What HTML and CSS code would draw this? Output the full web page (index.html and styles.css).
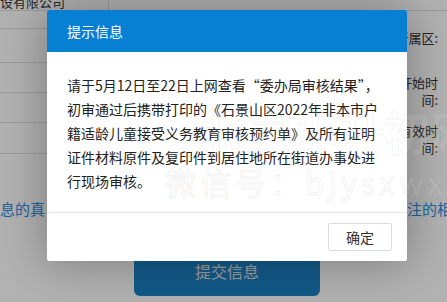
FILE: index.html
```html
<!DOCTYPE html>
<html lang="zh-CN">
<head>
<meta charset="utf-8">
<title>提示信息</title>
<link rel="stylesheet" href="styles.css">
</head>
<body>
<div class="page">
  <div class="row-top"><div class="cell-name"><span>设有限公司</span></div></div>
  <div class="table">
    <div class="col-left">
      <div class="tr r1"></div>
      <div class="tr r2"></div>
      <div class="tr r3"></div>
      <div class="tr r4"></div>
      <div class="tr r5"></div>
    </div>
    <div class="col-right">
      <div class="label l1">所属区:</div>
      <div class="label l2">开始时<br>间:</div>
      <div class="label l3">有效时<br>间:</div>
    </div>
  </div>
  <div class="links"><span>息的真</span><span class="cut">注的相关</span></div>
  <div class="submit-wrap"><div class="submit">提交信息</div></div>
</div>
<div class="overlay"></div>
<div class="modal">
  <div class="modal-head">提示信息</div>
  <div class="modal-body">请于5月12日至22日上网查看“委办局审核结果”，<br>初审通过后携带打印的《石景山区2022年非本市户<br>籍适龄儿童接受义务教育审核预约单》及所有证明<br>证件材料原件及复印件到居住地所在街道办事处进<br>行现场审核。</div>
  <div class="modal-foot"><button class="btn-ok">确定</button></div>
</div>
<div class="watermark">
  <div class="wm-big">北京小升初网</div>
  <div class="wm-small">微信号：bjysxwx</div>
</div>
</body>
</html>
```
FILE: styles.css
```css
html, body {
  margin: 0;
  padding: 0;
}
body {
  width: 447px;
  height: 302px;
  overflow: hidden;
  position: relative;
  background: #fff;
  font-family: "Noto Sans CJK SC", "Noto Sans", sans-serif;
  color: #333;
}
.page {
  width: 447px;
  height: 302px;
  display: flex;
  flex-direction: column;
}
.row-top {
  height: 10px;
  border-bottom: 1px solid #ddd;
  display: flex;
}
.cell-name {
  width: 108px;
  height: 10px;
  border-right: 1px solid #ddd;
  overflow: hidden;
  display: flex;
  align-items: flex-end;
}
.cell-name span {
  font-size: 13px;
  line-height: 16px;
  white-space: nowrap;
  color: #333;
}
.table {
  display: flex;
  height: 143px;
}
.col-left {
  flex: 1;
  display: flex;
  flex-direction: column;
}
.tr {
  border-bottom: 1px solid #ddd;
}
.r1 { height: 17px; }
.r2 { height: 33px; }
.r3 { height: 29px; }
.r4 { height: 29px; }
.r5 { height: 30px; }
.col-right {
  width: 70px;
  padding-right: 9px;
  text-align: right;
  font-size: 13px;
  line-height: 17px;
  color: #333;
  white-space: nowrap;
}
.l1 { padding-top: 18px; }
.l2 { padding-top: 28px; }
.l3 { padding-top: 14px; }
.links {
  margin-top: 45px;
  display: flex;
  justify-content: space-between;
  font-size: 15px;
  line-height: 20px;
  color: #2a8fe5;
}
.links .cut {
  width: 40px;
  overflow: hidden;
  white-space: nowrap;
}
.submit-wrap {
  margin-top: 27px;
  padding-left: 134px;
}
.submit {
  width: 186px;
  height: 50px;
  border-radius: 6px;
  background: #1b81c5;
  color: #e2e2e2;
  font-size: 16px;
  line-height: 50px;
  text-align: center;
}
.overlay {
  position: absolute;
  inset: 0;
  background: rgba(0, 0, 0, 0.3);
}
.modal {
  position: absolute;
  left: 47px;
  top: 10px;
  width: 360px;
  background: #fff;
  border-radius: 2px;
  box-shadow: 0 0 45px 4px rgba(0, 0, 0, 0.28);
  overflow: hidden;
}
.modal-head {
  height: 42px;
  background: #0780d3;
  color: #fff;
  font-size: 14px;
  line-height: 42px;
  padding-left: 20px;
}
.modal-body {
  padding: 21px 20px 19px;
  font-size: 14px;
  line-height: 24px;
  color: #222;
  white-space: nowrap;
  border-bottom: 1px solid #e5e5e5;
}
.modal-foot {
  display: flex;
  justify-content: flex-end;
  padding: 10px 15px 10px;
}
.btn-ok {
  width: 64px;
  height: 28px;
  border: 1px solid #dcdcdc;
  border-radius: 2px;
  background: #fff;
  font-family: "Noto Sans CJK SC", "Noto Sans", sans-serif;
  font-size: 14px;
  color: #333;
  padding: 0;
}
.watermark {
  position: absolute;
  inset: 0;
  pointer-events: none;
}
.wm-big {
  position: absolute;
  left: 200px;
  top: 100px;
  font-size: 46px;
  line-height: 60px;
  font-weight: bold;
  white-space: nowrap;
  color: rgba(255, 255, 255, 0.1);
  -webkit-text-stroke: 1px rgba(150, 150, 150, 0.12);
}
.wm-small {
  position: absolute;
  left: 165px;
  top: 160px;
  font-size: 31px;
  line-height: 44px;
  letter-spacing: 4px;
  white-space: nowrap;
  color: rgba(255, 255, 255, 0.12);
  -webkit-text-stroke: 1px rgba(150, 150, 150, 0.15);
}
```
